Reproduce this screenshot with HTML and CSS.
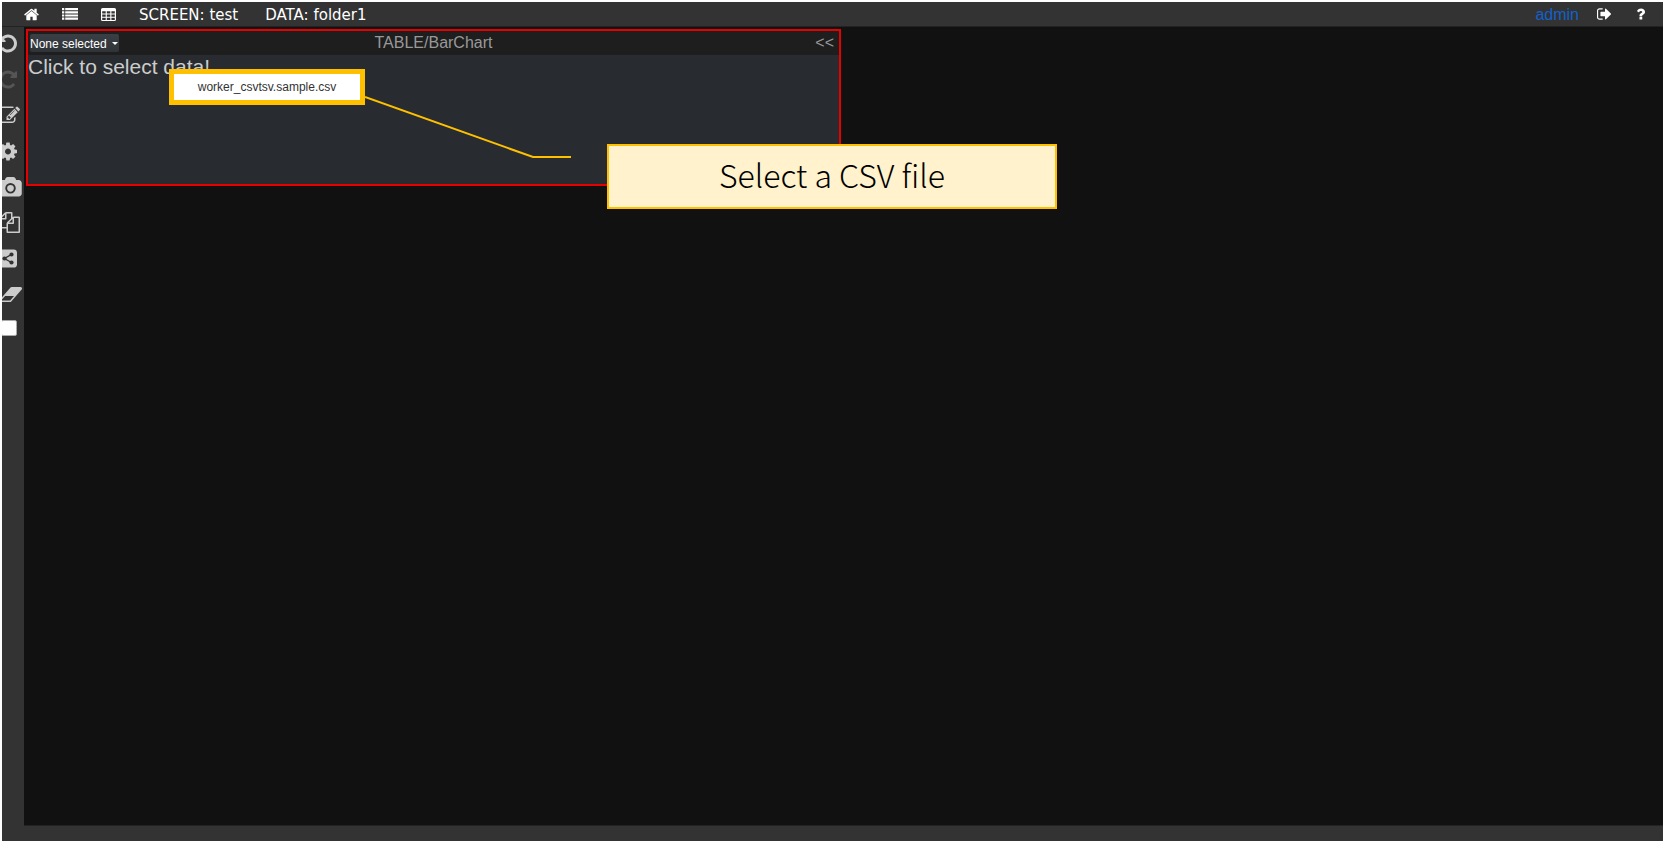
FILE: index.html
```html
<!DOCTYPE html>
<html lang="en">
<head>
<meta charset="utf-8">
<title>SCREEN: test</title>
<link rel="stylesheet" href="styles.css">
</head>
<body>
<div class="app">
  <header class="topbar">
    <nav class="nav">
      <a class="icon-link home" href="#" aria-label="Home"><svg viewBox="64 192 1664 1408"><path d="M1472 992v480q0 26-19 45t-45 19h-384v-384h-256v384h-384q-26 0-45-19t-19-45v-480q0-1 .5-3t.5-3l575-474 575 474q1 2 1 6zm223-69l-62 74q-8 9-21 11h-3q-13 0-21-7l-692-577-692 577q-12 8-24 7-13-2-21-11l-62-74q-8-10-7-23.500t11-21.500l719-599q32-26 76-26t76 26l244 204v-195q0-14 9-23t23-9h192q14 0 23 9t9 23v408l219 182q10 8 11 21.500t-7 23.500z"/></svg></a>
      <a class="icon-link list" href="#" aria-label="Screen list"><svg viewBox="0 0 16 12"><path d="M0 0h2.300v2.200H0zM3.200 0H16v2.200H3.200zM0 3.200h2.300v2.200H0zM3.200 3.200H16v2.200H3.200zM0 6.400h2.300v2.200H0zM3.200 6.400H16v2.200H3.200zM0 9.600h2.300v2.200H0zM3.200 9.600H16v2.200H3.200z"/></svg></a>
      <a class="icon-link table" href="#" aria-label="Data table"><svg viewBox="0 0 15 13"><path fill-rule="evenodd" d="M1.500 0h12Q15 0 15 1.500v10Q15 13 13.500 13h-12Q0 13 0 11.500v-10Q0 0 1.500 0zM1.200 3.200v2.300h3.500V3.200zM5.800 3.200v2.300h3.500V3.200zM10.400 3.200v2.300h3.400V3.200zM1.200 6.500v2.200h3.500V6.500zM5.800 6.500v2.200h3.500V6.500zM10.400 6.500v2.200h3.400V6.500zM1.200 9.700v2.200h3.500V9.700zM5.800 9.700v2.200h3.500V9.700zM10.400 9.700v2.200h3.400V9.700z"/></svg></a>
      <span class="crumb">SCREEN: test</span>
      <span class="crumb">DATA: folder1</span>
    </nav>
    <nav class="account">
      <a class="user" href="#">admin</a>
      <a class="icon-link out" href="#" aria-label="Sign out"><svg viewBox="64 256 1568 1280"><path d="M704 1440q0 4 1 20t.5 26.500-3 23.500-10 19.500-20.500 6.500h-320q-119 0-203.500-84.500t-84.500-203.500v-704q0-119 84.500-203.500t203.500-84.500h320q13 0 22.500 9.500t9.500 22.500q0 4 1 20t.5 26.500-3 23.500-10 19.500-20.500 6.500h-320q-66 0-113 47t-47 113v704q0 66 47 113t113 47h312l11.500 1 11.500 3 8 5.500 7 9 2 13.500zm928-544q0 26-19 45l-544 544q-19 19-45 19t-45-19-19-45v-288h-448q-26 0-45-19t-19-45v-384q0-26 19-45t45-19h448v-288q0-26 19-45t45-19 45 19l544 544q19 19 19 45z"/></svg></a>
      <a class="icon-link help" href="#" aria-label="Help"><svg viewBox="480 256 924 1280"><path d="M1088 1256v240q0 16-12 28t-28 12h-240q-16 0-28-12t-12-28v-240q0-16 12-28t28-12h240q16 0 28 12t12 28zm316-600q0 54-15.500 101t-35 76.500-55 59.500-57.500 43.500-61 35.500q-41 23-68.500 65t-27.500 67q0 17-12 32.500t-28 15.500h-240q-15 0-25.500-18.500t-10.500-37.500v-45q0-83 65-156.500t143-108.500q59-27 84-56t25-76q0-42-46.500-74t-107.500-32q-65 0-108 29-35 25-107 115-13 16-31 16-12 0-25-8l-164-125q-13-10-15.500-25t5.500-28q160-266 464-266 80 0 161 31t146 83 106 127.500 41 158.500z"/></svg></a>
    </nav>
  </header>

  <div class="workspace">
    <aside class="tools">
      <button class="tool" aria-label="Undo"><svg viewBox="128 0 1792 1792"><path id="undo-shape" d="M1664 896q0 156-61 298t-164 245-245 164-298 61q-172 0-327-72.500t-264-204.500q-7-10-6.500-22.500t8.500-20.500l137-138q10-9 25-9 16 2 23 12 73 95 179 147t225 52q104 0 198.500-40.500t163.500-109.500 109.500-163.500 40.500-198.500-40.500-198.500-109.500-163.500-163.500-109.500-198.500-40.500q-98 0-188 35.500t-160 101.500l137 138q31 30 14 69-17 40-59 40h-448q-26 0-45-19t-19-45v-448q0-42 40-59 39-17 69 14l130 129q107-101 244.500-156.500t284.500-55.500q156 0 298 61t245 164 164 245 61 298z"/></svg></button>
      <button class="tool" aria-label="Redo" disabled><svg viewBox="128 0 1792 1792"><use href="#undo-shape" transform="translate(1792 0) scale(-1 1)"/></svg></button>
      <button class="tool" aria-label="Edit"><svg viewBox="0 0 1792 1792"><path d="M888 1184l116-116-152-152-116 116v56h96v96h56zm440-720q-16-16-33 1l-350 350q-17 17-1 33t33-1l350-350q17-17 1-33zm80 594v190q0 119-84.500 203.500t-203.500 84.500h-832q-119 0-203.500-84.500t-84.500-203.500v-832q0-119 84.500-203.500t203.500-84.500h832q63 0 117 25 15 7 18 23 3 17-9 29l-49 49q-14 14-32 8-23-6-45-6h-832q-66 0-113 47t-47 113v832q0 66 47 113t113 47h832q66 0 113-47t47-113v-126q0-13 9-22l64-64q15-15 35-7t20 29zm-96-738l288 288-672 672h-288v-288zm444 132l-92 92-288-288 92-92q28-28 68-28t68 28l152 152q28 28 28 68t-28 68z"/></svg></button>
      <button class="tool" aria-label="Settings"><svg viewBox="128 0 1792 1792"><path d="M1152 896q0-106-75-181t-181-75-181 75-75 181 75 181 181 75 181-75 75-181zm512-109v222q0 12-8 23t-20 13l-185 28q-19 54-39 91 35 50 107 138 10 12 10 25t-9 23q-27 37-99 108t-94 71q-12 0-26-9l-138-108q-44 23-91 38-16 136-29 186-7 28-36 28h-222q-14 0-24.500-8.500t-11.500-21.500l-28-184q-49-16-90-37l-141 107q-10 9-25 9-14 0-25-11-126-114-165-168-7-10-7-23 0-12 8-23 15-21 51-66.500t54-70.500q-27-50-41-99l-183-27q-13-2-21-12.500t-8-23.500v-222q0-12 8-23t19-13l186-28q14-46 39-92-40-57-107-138-10-12-10-24 0-10 9-23 26-36 98.500-107.500t94.500-71.500q13 0 26 10l138 107q44-23 91-38 16-136 29-186 7-28 36-28h222q14 0 24.500 8.500t11.500 21.500l28 184q49 16 90 37l142-107q9-9 24-9 13 0 25 10 129 119 165 170 7 8 7 22 0 12-8 23-15 21-51 66.500t-54 70.500q26 50 41 98l183 28q13 2 21 12.500t8 23.500z"/></svg></button>
      <button class="tool" aria-label="Capture"><svg class="wide" viewBox="-64 0 1920 1792"><path d="M896 672q119 0 203.500 84.500t84.500 203.500-84.500 203.500-203.500 84.500-203.500-84.500-84.500-203.500 84.500-203.500 203.500-84.500zm704-416q106 0 181 75t75 181v896q0 106-75 181t-181 75h-1408q-106 0-181-75t-75-181v-896q0-106 75-181t181-75h224l51-136q19-49 69.500-84.500t103.500-35.500h512q53 0 103.500 35.500t69.500 84.500l51 136h224zm-704 1152q185 0 316.500-131.500t131.500-316.500-131.500-316.500-316.500-131.500-316.500 131.500-131.500 316.500 131.500 316.500 316.500 131.500z"/></svg></button>
      <button class="tool" aria-label="Copy"><svg viewBox="0 0 1792 1792"><path d="M1696 384q40 0 68 28t28 68v1216q0 40-28 68t-68 28h-960q-40 0-68-28t-28-68v-288h-544q-40 0-68-28t-28-68v-672q0-40 20-88t48-76l408-408q28-28 76-48t88-20h416q40 0 68 28t28 68v328q68-40 128-40h416zm-544 213l-299 299h299v-299zm-640-384l-299 299h299v-299zm196 647l316-316v-416h-384v416q0 40-28 68t-68 28h-416v640h512v-256q0-40 20-88t48-76zm956 804v-1152h-384v416q0 40-28 68t-68 28h-416v640h896z"/></svg></button>
      <button class="tool" aria-label="Share"><svg viewBox="128 0 1792 1792"><rect x="128" y="128" width="1536" height="1536" rx="288"/><g class="cut"><circle cx="1195" cy="554" r="180"/><circle cx="1195" cy="1238" r="180"/><circle cx="597" cy="896" r="180"/><path d="M1195 554L597 896l598 342" fill="none" stroke-width="120"/></g></svg></button>
      <button class="tool" aria-label="Erase"><svg class="wide" viewBox="-64 0 1984 1792"><path d="M896 1408l336-384H464l-336 384h768zm1013-1077q15 34 9.500 71.500t-30.500 65.500l-896 1024q-38 44-96 44H128q-38 0-69.500-20.500T11 1461q-15-34-9.500-71.500T32 1324L928 300q38-44 96-44h768q38 0 69.500 20.500T1909 331z"/></svg></button>
      <input class="swatch" type="checkbox" aria-label="Select background">
    </aside>

    <main class="canvas">
      <section class="panel">
        <div class="panel-head">
          <button class="picker">None selected <span class="caret"></span></button>
          <h1 class="panel-title">TABLE/BarChart</h1>
          <button class="collapse" aria-label="Collapse">&lt;&lt;</button>
        </div>
        <p class="prompt">Click to select data!</p>
      </section>

      <button class="file-option">worker_csvtsv.sample.csv</button>
      <svg class="leader" viewBox="0 0 208 64"><path d="M0 2L168 62H206"/></svg>
      <div class="callout">Select a CSV file</div>
    </main>
  </div>
  <footer class="bottombar"></footer>
</div>
</body>
</html>
```
FILE: styles.css
```css
* { box-sizing: border-box; }

body {
  margin: 0;
  background: #fff;
  font-family: "Liberation Sans", Arial, sans-serif;
}

button {
  margin: 0;
  padding: 0;
  border: 0;
  background: none;
  font-family: inherit;
}

.app {
  display: flex;
  flex-direction: column;
  min-height: 100vh;
  border: 2px solid #fff;
  border-bottom: 0;
  background: #333;
}

.topbar {
  display: flex;
  justify-content: space-between;
  height: 25px;
  border-bottom: 1px solid #222;
  color: #fff;
}

.nav,
.account {
  display: flex;
  align-items: center;
  gap: 23px;
}

.nav { padding-left: 22px; }
.account { padding-right: 18px; gap: 18px; }

.icon-link { display: flex; }
.icon-link svg { display: block; fill: #fff; }
.home svg { width: 15px; height: 13px; }
.list svg { width: 16px; height: 12px; }
.table svg { width: 15px; height: 13px; }
.out svg { width: 14px; height: 12px; }
.help { padding-left: 8px; }
.help svg { width: 8px; height: 12px; }

.crumb,
.user { padding-top: 2px; }

.crumb {
  padding-right: 4px;
  font-family: "DejaVu Sans", Verdana, sans-serif;
  font-size: 15px;
}

.user {
  color: #1261c9;
  font-size: 16px;
  text-decoration: none;
}

.workspace {
  display: grid;
  grid-template-columns: 22px 1fr;
  flex: 1;
}

.tools {
  display: flex;
  flex-direction: column;
  align-items: flex-start;
  justify-content: space-between;
  height: 303px;
  margin-top: 6px;
  overflow: hidden;
}

.tool {
  display: block;
  margin-left: -3px;
}

.tool svg {
  display: block;
  width: 21px;
  height: 21px;
  fill: #ccc;
}

.tool svg.wide { width: 23px; }
.tool:disabled svg { fill: #555; }
.tool .cut { fill: #333; stroke: #333; }

.swatch {
  appearance: none;
  width: 16px;
  height: 16px;
  margin: 0 0 0 -1px;
  border: 1px solid #aaa;
  border-radius: 2px;
  background: #fff;
}

.canvas {
  position: relative;
  display: grid;
  grid-template-columns: 1fr 1fr;
  gap: 7px;
  align-items: start;
  padding: 2px 0 0 2px;
  border-bottom: 1px solid #222;
  background: #111;
}

.panel {
  min-height: 157px;
  border: 2px solid #e60000;
  background: #282c30;
}

.panel-head {
  display: grid;
  grid-template-columns: 1fr auto 1fr;
  align-items: center;
  height: 24px;
  padding: 0 2px;
  background: #1e1e1e;
}

.picker {
  display: flex;
  align-items: center;
  justify-content: space-between;
  justify-self: start;
  width: 89px;
  height: 18px;
  padding: 1px 1px 0 0;
  border-radius: 2px;
  background: linear-gradient(#3a3f45, #2f3439);
  color: #fff;
  font-size: 12px;
}

.caret {
  border: 3px solid transparent;
  border-top-color: #fff;
  border-bottom: 0;
}

.panel-title {
  margin: 0;
  color: #999;
  font-size: 16px;
  font-weight: 400;
}

.collapse {
  justify-self: end;
  padding-right: 3px;
  color: #999;
  font-size: 16px;
}

.prompt {
  margin: 0;
  color: #ccc;
  font-size: 21px;
  line-height: 23px;
}

.file-option {
  position: absolute;
  top: 42px;
  left: 145px;
  width: 196px;
  height: 36px;
  border: 5px solid #ffc000;
  background: #fff;
  color: #333;
  font-size: 12px;
}

.leader {
  position: absolute;
  top: 68px;
  left: 341px;
  width: 208px;
  height: 64px;
  fill: none;
  stroke: #ffc000;
  stroke-width: 2;
}

.callout {
  position: absolute;
  top: 117px;
  left: 583px;
  width: 450px;
  padding-bottom: 5px;
  border: 2px solid #ffc000;
  background: #fff2cc;
  color: #000;
  font-family: "Noto Sans CJK JP", sans-serif;
  font-size: 32px;
  font-weight: 300;
  line-height: 56px;
  text-align: center;
}

.bottombar { height: 15px; }
```
